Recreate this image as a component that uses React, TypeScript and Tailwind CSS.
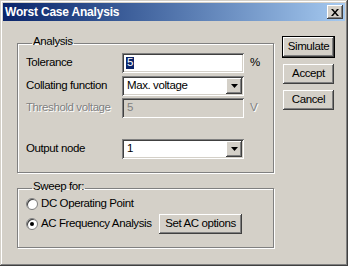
import React from 'react';

const raised =
  'shadow-[inset_-1px_-1px_0_#404040,inset_1px_1px_0_#ffffff,inset_-2px_-2px_0_#808080,inset_2px_2px_0_#d4d0c8]';
const sunken =
  'shadow-[inset_1px_1px_0_#808080,inset_-1px_-1px_0_#ffffff,inset_2px_2px_0_#404040,inset_-2px_-2px_0_#d4d0c8]';
const etched = 'border border-[#808080] shadow-[inset_1px_1px_0_#ffffff,1px_1px_0_#ffffff]';

const Arrow = () => (
  <div className={`w-[16px] h-[16px] bg-[#d4d0c8] flex items-center justify-center ${raised}`}>
    <svg width="7" height="4" viewBox="0 0 7 4">
      <path d="M0 0h7L3.5 4z" fill="#000" />
    </svg>
  </div>
);

const Combo = ({ value }: { value: string }) => (
  <div className={`w-[122px] h-[20px] bg-white flex items-center justify-between pl-[5px] pr-[2px] ${sunken}`}>
    <span className="text-black">{value}</span>
    <Arrow />
  </div>
);

const Button = ({ label, primary, className }: { label: string; primary?: boolean; className?: string }) => (
  <div
    className={`h-[20px] bg-[#d4d0c8] flex items-center justify-center text-black ${
      primary ? 'outline outline-1 outline-black' : ''
    } ${raised} ${className ?? ''}`}
  >
    {label}
  </div>
);

const Radio = ({ checked, label }: { checked?: boolean; label: string }) => (
  <div className="flex items-center h-[16px]">
    <div className="w-[12px] h-[12px] rounded-full bg-white border border-[#808080] shadow-[inset_1px_1px_0_#404040] flex items-center justify-center">
      {checked && <div className="w-[4px] h-[4px] rounded-full bg-black" />}
    </div>
    <span className="ml-[3px] text-black">{label}</span>
  </div>
);

export default function App() {
  return (
    <div
      className="w-[348px] h-[266px] bg-[#d4d0c8] p-[3px] flex flex-col text-[11.5px] tracking-[-0.4px] leading-none whitespace-nowrap shadow-[inset_-1px_-1px_0_#404040,inset_1px_1px_0_#d4d0c8,inset_-2px_-2px_0_#808080,inset_2px_2px_0_#ffffff]"
      style={{ fontFamily: '"Liberation Sans", Arial, sans-serif' }}
    >
      <div className="h-[18px] flex items-center justify-between pl-[2px] pr-[2px] bg-gradient-to-r from-[#0a246a] to-[#a6caf0]">
        <span className="text-white font-bold text-[12px] tracking-[-0.2px]">Worst Case Analysis</span>
        <div className={`w-[16px] h-[14px] bg-[#d4d0c8] flex items-center justify-center ${raised}`}>
          <svg width="8" height="7" viewBox="0 0 8 7">
            <path d="M0 0h2l2 2.5L6 0h2L5 3.5 8 7H6L4 4.5 2 7H0l3-3.5z" fill="#000" />
          </svg>
        </div>
      </div>

      <div className="flex pl-[14px] pt-[15px]">
        <div className="flex flex-col">
          <fieldset className={`w-[257px] h-[137px] pl-[8px] ${etched}`}>
            <legend className="ml-[6px] px-[1px] h-[14px] text-black">Analysis</legend>
            <div className="flex items-center h-[20px] mt-[3px]">
              <span className="w-[96px] text-black">Tolerance</span>
              <div className={`w-[122px] h-[20px] bg-white flex items-center pl-[4px] ${sunken}`}>
                <span className="bg-[#0a246a] text-white px-[1px]">5</span>
              </div>
              <span className="ml-[6px] text-black">%</span>
            </div>
            <div className="flex items-center h-[20px] mt-[3px]">
              <span className="w-[96px] text-black">Collating function</span>
              <Combo value="Max. voltage" />
            </div>
            <div className="flex items-center h-[20px] mt-[2px]">
              <span className="w-[96px] text-[#808080] [text-shadow:1px_1px_0_#ffffff]">Threshold voltage</span>
              <div className={`w-[122px] h-[20px] bg-[#d4d0c8] flex items-center pl-[5px] ${sunken}`}>
                <span className="text-[#808080]">5</span>
              </div>
              <span className="ml-[6px] text-[#808080] [text-shadow:1px_1px_0_#ffffff]">V</span>
            </div>
            <div className="flex items-center h-[20px] mt-[21px]">
              <span className="w-[96px] text-black">Output node</span>
              <Combo value="1" />
            </div>
          </fieldset>

          <fieldset className={`w-[257px] h-[67px] mt-[8px] pl-[8px] ${etched}`}>
            <legend className="ml-[6px] px-[1px] h-[14px] text-black">Sweep for:</legend>
            <div className="mt-[1px]">
              <Radio label="DC Operating Point" />
            </div>
            <div className="flex items-center mt-[2px]">
              <div className="w-[133px]">
                <Radio checked label="AC Frequency Analysis" />
              </div>
              <Button label="Set AC options" className="w-[83px]" />
            </div>
          </fieldset>
        </div>

        <div className="flex flex-col ml-[9px] pt-[1px]">
          <Button label="Simulate" primary className="w-[51px]" />
          <Button label="Accept" className="w-[51px] mt-[7px]" />
          <Button label="Cancel" className="w-[51px] mt-[6px]" />
        </div>
      </div>
    </div>
  );
}
